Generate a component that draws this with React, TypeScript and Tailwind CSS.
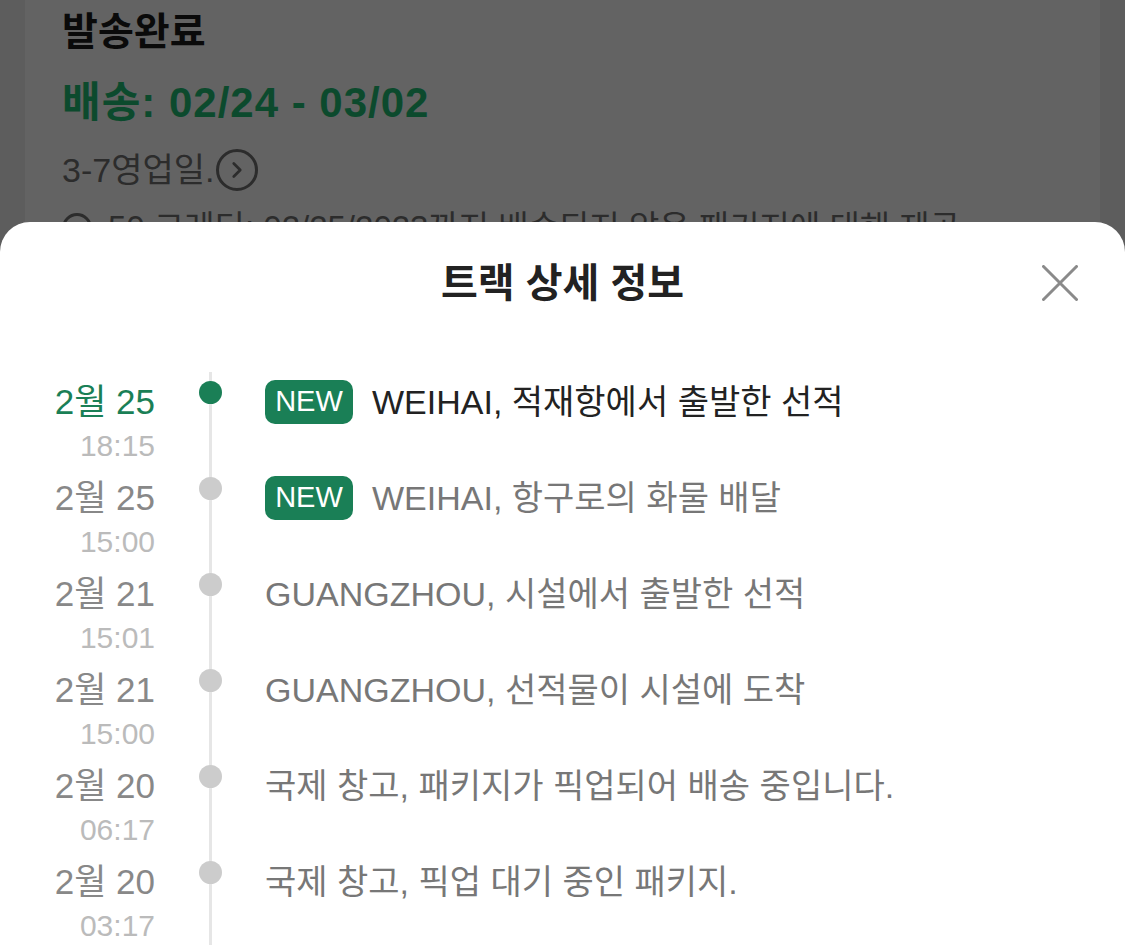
import { ChevronRight } from 'lucide-react';

type Track = {
  date: string;
  time: string;
  text: string;
  isNew?: boolean;
  current?: boolean;
};

const tracks: Track[] = [
  { date: '2월 25', time: '18:15', text: 'WEIHAI, 적재항에서 출발한 선적', isNew: true, current: true },
  { date: '2월 25', time: '15:00', text: 'WEIHAI, 항구로의 화물 배달', isNew: true },
  { date: '2월 21', time: '15:01', text: 'GUANGZHOU, 시설에서 출발한 선적' },
  { date: '2월 21', time: '15:00', text: 'GUANGZHOU, 선적물이 시설에 도착' },
  { date: '2월 20', time: '06:17', text: '국제 창고, 패키지가 픽업되어 배송 중입니다.' },
  { date: '2월 20', time: '03:17', text: '국제 창고, 픽업 대기 중인 패키지.' },
];

const font = "font-['Liberation_Sans','Noto_Sans_CJK_KR',sans-serif]";

const TrackRow = ({ item }: { item: Track }) => (
  <div className="flex h-[96px]">
    <div className="w-[155px] pt-[10px] text-right">
      <div className={`text-[35px] leading-[40px] ${item.current ? 'text-[#1a7f56]' : 'text-[#888888]'}`}>
        {item.date}
      </div>
      <div className="mt-[6px] text-[30px] leading-[36px] text-[#bbbbbb]">{item.time}</div>
    </div>
    <div className="relative flex w-[110px] justify-center">
      <div className="h-full w-[3px] bg-[#e6e6e6]" />
      <div
        className={`absolute top-[9px] h-[23px] w-[23px] rounded-full ${item.current ? 'bg-[#1a7f56]' : 'bg-[#cccccc]'}`}
      />
    </div>
    <div className="mt-[10px] flex h-[40px] flex-1 items-center">
      {item.isNew && (
        <span className="mr-[19px] flex h-[44px] w-[88px] items-center justify-center rounded-[10px] bg-[#1a7f56] text-[29px] text-white">
          NEW
        </span>
      )}
      <span className={`whitespace-nowrap text-[34px] leading-[40px] ${item.current ? 'text-[#222222]' : 'text-[#777777]'}`}>
        {item.text}
      </span>
    </div>
  </div>
);

export default function App() {
  return (
    <div className={`relative h-[945px] w-full overflow-hidden bg-[#5d5d5d] ${font}`}>
      {/* dimmed page behind the sheet */}
      <div className="mx-[25px] h-full bg-[#636363] pl-[37px] pt-[8px]">
        <h2 className="text-[39px] font-bold leading-[48px] text-[#0a0a0a]">발송완료</h2>
        <div className="mt-[22px] text-[42px] font-bold leading-[50px] tracking-[1px] text-[#0c4a2d]">
          배송: 02/24 - 03/02
        </div>
        <div className="mt-[20px] flex items-center text-[34px] leading-[44px] text-[#2c2c2c]">
          <span>3-7영업일.</span>
          <span className="ml-[2px] flex h-[42px] w-[42px] items-center justify-center rounded-full border-[3px] border-[#2c2c2c]">
            <ChevronRight size={26} strokeWidth={2.5} />
          </span>
        </div>
        <div className="mt-[14px] flex items-center whitespace-nowrap text-[33px] leading-[44px] text-[#2c2c2c]">
          <span className="mr-[16px] h-[30px] w-[30px] shrink-0 rounded-full border-[3px] border-[#2c2c2c]" />
          <span>50 크레딧: 02/25/2023까지 배송되지 않은 패키지에 대해 제공</span>
        </div>
      </div>

      {/* bottom sheet */}
      <div className="absolute inset-x-0 bottom-0 top-[222px] rounded-t-[30px] bg-white">
        <div className="relative pt-[38px]">
          <h1 className="text-center text-[40px] font-bold leading-[46px] text-[#222222]">트랙 상세 정보</h1>
          <button className="absolute right-[47px] top-[43px]">
            <svg width="36" height="36" viewBox="0 0 36 36" fill="none">
              <path d="M1.5 1.5 34.5 34.5 M34.5 1.5 1.5 34.5" stroke="#8a8a8a" strokeWidth="3" strokeLinecap="round" />
            </svg>
          </button>
        </div>
        <div className="mt-[66px]">
          {tracks.map((t, i) => (
            <TrackRow key={i} item={t} />
          ))}
        </div>
      </div>
    </div>
  );
}
